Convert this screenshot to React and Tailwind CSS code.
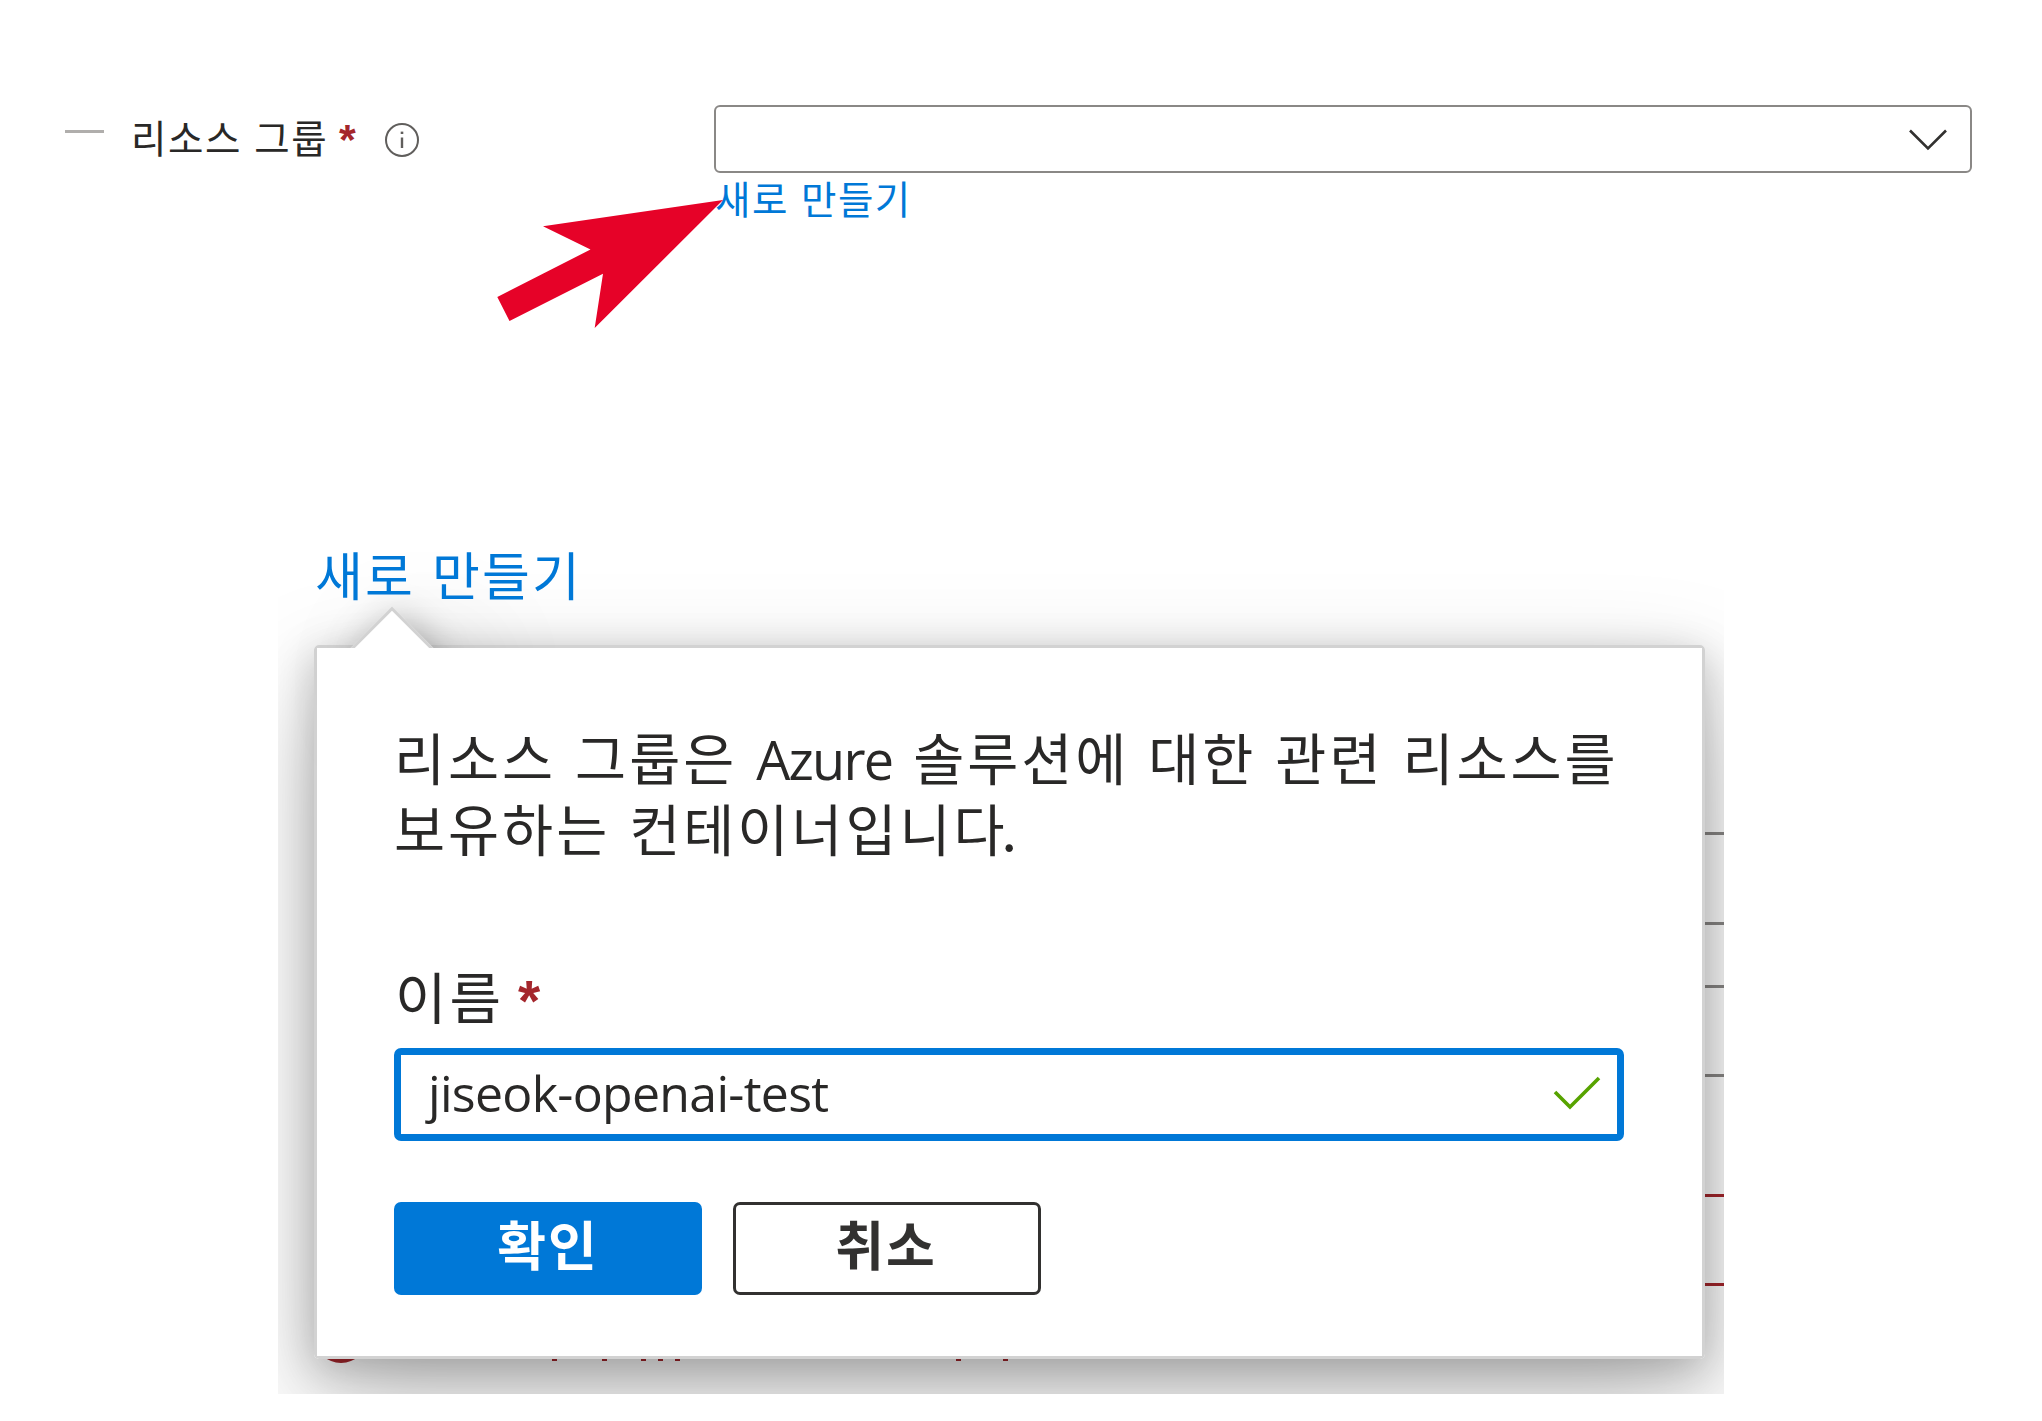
import React from "react";

const KR = "font-['Noto_Sans_CJK_KR',sans-serif]";
const LATIN = "font-['Open_Sans','Noto_Sans',sans-serif]";

function Asterisk({ className }) {
  return (
    <span className={`font-['Liberation_Sans',sans-serif] font-bold leading-none text-[#a4262c] ${className}`}>*</span>
  );
}

function InfoIcon({ className }) {
  return (
    <svg className={className} width="36" height="36" viewBox="0 0 36 36" fill="none" stroke="#605e5c">
      <circle cx="18" cy="18" r="16" strokeWidth="2" />
      <path d="M18 15.5V26" strokeWidth="2.4" />
      <path d="M18 9.6V12" strokeWidth="2.6" />
    </svg>
  );
}

function PointerArrow() {
  return (
    <svg className="absolute left-[490px] top-[190px]" width="240" height="145" viewBox="490 190 240 145">
      <polygon points="723,200 543,226.3 590.5,249.5 497.3,297 509.5,321 603,273.7 594.7,328" fill="#e60228" />
    </svg>
  );
}

function ResourceGroupField() {
  return (
    <div className="relative flex h-[530px] items-start">
      <div className="ml-[65px] mt-[130px] h-[3px] w-[39px] bg-[#b0aeac]" />
      <div className="ml-[27px] mt-[104px] flex h-[68px] w-[583px] items-start text-[#292827]">
        <span className="w-[198px] whitespace-nowrap text-[38.5px] leading-[65px] tracking-[1.6px] [word-spacing:2px]">리소스 그룹</span>
        <Asterisk className="ml-[10px] mt-[14px] w-[17px] text-[43px]" />
        <InfoIcon className="ml-[28px] mt-[18px]" />
      </div>
      <div className="mt-[104.5px]">
        <div className="flex h-[68px] w-[1258px] items-center justify-end rounded-[6px] border-2 border-[#8a8886] bg-white pr-[23px]">
          <svg width="38" height="24" viewBox="0 0 38 24" fill="none" stroke="#323130" strokeWidth="2.6">
            <path d="M1 3.5L19 21.5L37 3.5" />
          </svg>
        </div>
        <a className="ml-px block whitespace-nowrap text-[38.5px] leading-[48px] tracking-[1.5px] text-[#0078d7] [word-spacing:2px]">새로 만들기</a>
      </div>
      <PointerArrow />
    </div>
  );
}

const HIDDEN_FIELDS = [
  { box: "top-[302px] h-[93px] border-[#8a8886]" },
  { box: "top-[455px] h-[92px] border-[#8a8886]" },
  { box: "top-[664px] h-[92px] border-[#a4262c]" },
];

const HIDDEN_MARKS = [
  "left-[274px]",
  "left-[324px]",
  "left-[363px]",
  "left-[380px]",
  "left-[397px]",
  "left-[678px]",
  "left-[725px]",
];

function CoveredForm() {
  return (
    <div className="absolute inset-0">
      {HIDDEN_FIELDS.map((f) => (
        <div key={f.box} className={`absolute left-[200px] right-[-20px] border-y-[3px] ${f.box}`} />
      ))}
      <div className="absolute left-[37px] top-[781px] h-[52px] w-[52px] rounded-full bg-[#a4262c]" />
      {HIDDEN_MARKS.map((m) => (
        <div key={m} className={`absolute top-[829px] h-[2px] w-[5px] bg-[#a4262c] ${m}`} />
      ))}
    </div>
  );
}

function Callout() {
  return (
    <div className="relative ml-9 h-[714px] w-[1391px] rounded-[5px] border-[3px] border-[#d2d2d2] shadow-[0_45px_111px_rgba(0,0,0,0.25),0_9px_40px_rgba(0,0,0,0.22)]">
      <div className="absolute left-[45px] top-[-29px] h-[60px] w-[60px] -rotate-45 border-[3px] border-[#d2d2d2] bg-white shadow-[0_49px_111px_rgba(0,0,0,0.25),0_9px_36px_rgba(0,0,0,0.28)]" />
      <div className="relative flex h-full flex-col bg-white pl-[77px] text-[#292827]">
        <p className="mt-[73px] h-[142px] whitespace-nowrap text-[55.5px] leading-[71px] tracking-[3px] [word-spacing:3.5px]">
          리소스 그룹은 <span className={`${LATIN} mr-[2px] text-[54px] leading-none tracking-[-1.8px]`}>Azure</span> 솔루션에 대한 관련 리소스를
          <br />
          보유하는 컨테이너입니다<span className="-ml-[6px]">.</span>
        </p>
        <div className="mt-[92px] flex h-[85px] items-start">
          <span className="ml-px w-[104px] whitespace-nowrap text-[56px] leading-[80px] tracking-[3px]">이름</span>
          <Asterisk className="ml-[19px] mt-[18px] text-[57px]" />
        </div>
        <div className="mt-2 flex h-[93px] w-[1230px] items-center justify-between rounded-[7px] border-[7px] border-[#0078d7] pb-[3px] pl-[27px] pr-[16px]">
          <span className={`${LATIN} text-[50px] leading-none tracking-[-0.7px]`}>jiseok-openai-test</span>
          <svg width="48" height="36" viewBox="0 0 48 36" fill="none" stroke="#57a300" strokeWidth="3.6">
            <path d="M2 17L17 32L46 3" />
          </svg>
        </div>
        <div className="mt-[61px] flex gap-[31px] text-[53px] font-bold leading-[82px] tracking-[2px]">
          <button className="flex h-[93px] w-[308px] justify-center rounded-[7px] bg-[#0078d7] text-white">확인</button>
          <button className="flex h-[93px] w-[308px] justify-center rounded-[7px] border-[3px] border-[#323130] pr-[2px] leading-[76px] text-[#323130]">취소</button>
        </div>
      </div>
    </div>
  );
}

export default function App() {
  return (
    <div className={`h-[1421px] w-[2042px] overflow-hidden bg-white ${KR}`}>
      <ResourceGroupField />
      <div className="relative ml-[278px] h-[864px] w-[1446px] overflow-hidden">
        <CoveredForm />
        <div className="h-[115px] pl-[37px] pt-[4px]">
          <a className="relative z-10 block whitespace-nowrap text-[52px] leading-[80px] tracking-[2.2px] text-[#0078d7] [word-spacing:3px]">새로 만들기</a>
        </div>
        <Callout />
      </div>
    </div>
  );
}
